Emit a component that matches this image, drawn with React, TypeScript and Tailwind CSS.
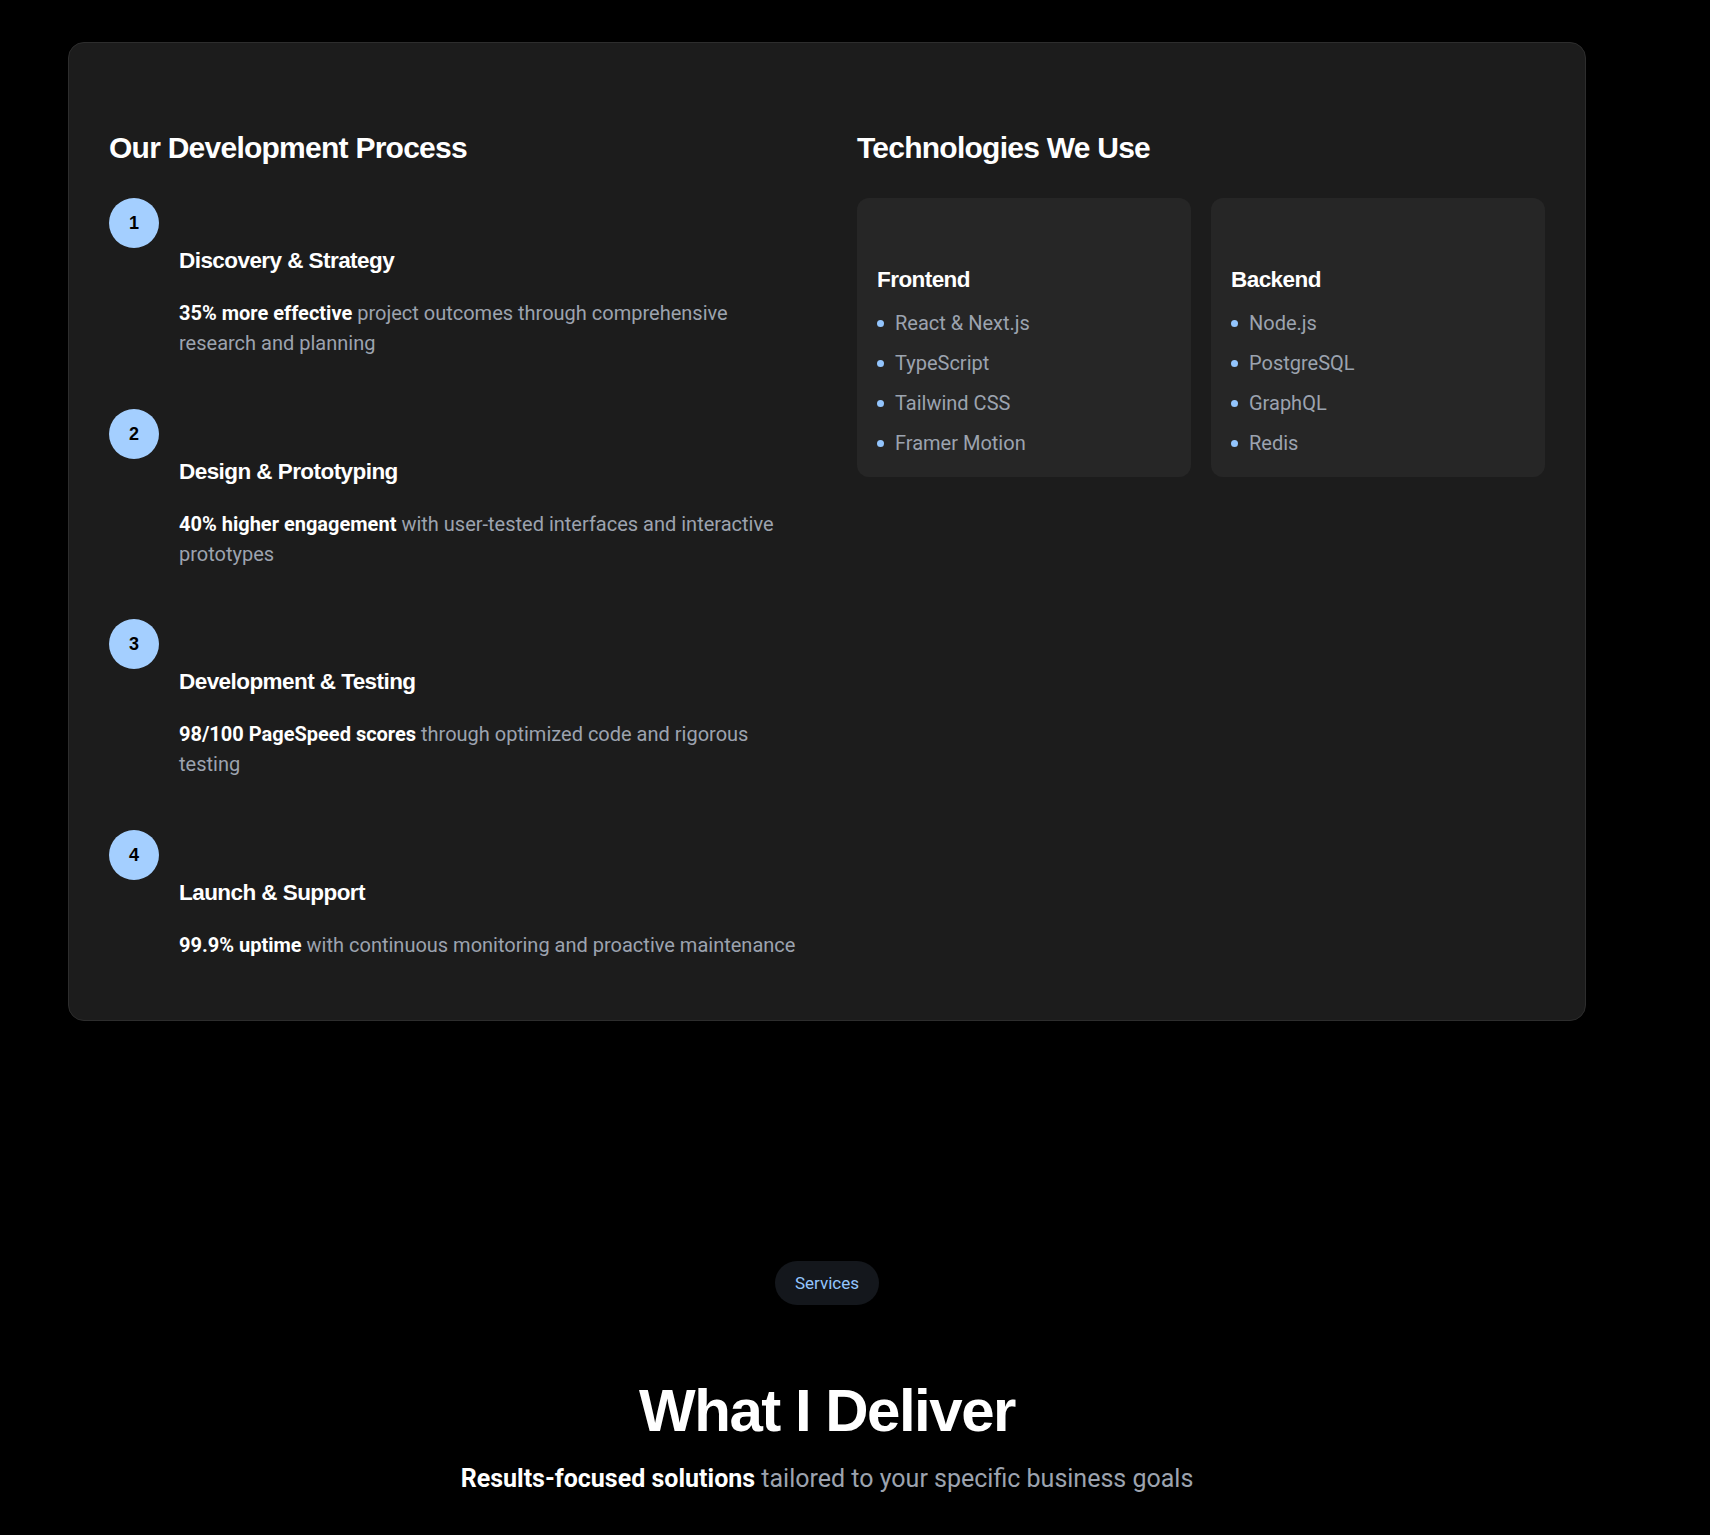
import React from "react";

// Process + tech stack card, followed by the "What I Deliver" section header

const heading = "font-['Liberation_Sans',Arial,Helvetica,sans-serif]";
const body = "font-['Roboto','Liberation_Sans',sans-serif]";

const steps = [
  {
    n: 1,
    title: "Discovery & Strategy",
    strong: "35% more effective",
    rest: "project outcomes through comprehensive research and planning",
  },
  {
    n: 2,
    title: "Design & Prototyping",
    strong: "40% higher engagement",
    rest: "with user-tested interfaces and interactive prototypes",
  },
  {
    n: 3,
    title: "Development & Testing",
    strong: "98/100 PageSpeed scores",
    rest: "through optimized code and rigorous testing",
  },
  {
    n: 4,
    title: "Launch & Support",
    strong: "99.9% uptime",
    rest: "with continuous monitoring and proactive maintenance",
  },
];

const stacks = [
  { name: "Frontend", items: ["React & Next.js", "TypeScript", "Tailwind CSS", "Framer Motion"] },
  { name: "Backend", items: ["Node.js", "PostgreSQL", "GraphQL", "Redis"] },
];

function StepItem({ step }: { step: (typeof steps)[number] }) {
  return (
    <div className="flex items-start gap-5">
      <div
        className={`flex h-[50px] w-[50px] shrink-0 items-center justify-center rounded-full bg-[#a4cfff] text-lg font-bold text-black ${heading}`}
      >
        {step.n}
      </div>
      <div className="flex-1">
        {/* icon slot (empty) */}
        <div className="h-12" />
        <h4 className={`mb-[23px] mt-px text-[22.5px] font-bold leading-[28px] tracking-tight text-white ${heading}`}>
          {step.title}
        </h4>
        <p className={`text-xl leading-[30px] text-[#9ca3af] ${body}`}>
          <strong className="font-bold text-white">{step.strong}</strong> {step.rest}
        </p>
      </div>
    </div>
  );
}

function StackCard({ stack }: { stack: (typeof stacks)[number] }) {
  return (
    <div className="rounded-xl bg-[#262626] p-5">
      <div className="h-12" />
      <h4 className={`mb-[15px] text-[22.5px] font-bold leading-[28px] tracking-tight text-white ${heading}`}>
        {stack.name}
      </h4>
      <ul className="flex flex-col gap-3">
        {stack.items.map((item) => (
          <li key={item} className={`flex items-center gap-[11px] text-xl leading-7 text-[#9ca3af] ${body}`}>
            <span className="h-[7px] w-[7px] shrink-0 rounded-full bg-[#93c5fd]" />
            {item}
          </li>
        ))}
      </ul>
    </div>
  );
}

export default function App() {
  return (
    <div className="min-h-[1535px] w-full bg-black">
      <div className="w-[1654px] pt-[42px]">
        {/* Process card */}
        <div className="mx-[68px] rounded-2xl border border-[#2d2d2d] bg-[#1c1c1c] px-10 pb-[60.5px] pt-[87px]">
          <div className="grid grid-cols-2 gap-[60px]">
            <div>
              <h3 className={`mb-8 text-3xl font-bold tracking-tight text-white ${heading}`}>
                Our Development Process
              </h3>
              <div className="flex flex-col gap-[50.5px]">
                {steps.map((s) => (
                  <StepItem key={s.n} step={s} />
                ))}
              </div>
            </div>
            <div>
              <h3 className={`mb-8 text-3xl font-bold tracking-tight text-white ${heading}`}>
                Technologies We Use
              </h3>
              <div className="grid grid-cols-2 gap-5">
                {stacks.map((s) => (
                  <StackCard key={s.name} stack={s} />
                ))}
              </div>
            </div>
          </div>
        </div>

        {/* Services header */}
        <div className="mt-[240px] flex flex-col items-center">
          <span className={`rounded-full bg-[#14171c] px-5 py-2.5 text-[17px] leading-6 text-[#93c5fd] ${body}`}>
            Services
          </span>
          <h2 className={`mt-[76px] text-6xl font-bold leading-none tracking-tight text-white ${heading}`}>
            What I Deliver
          </h2>
          <p className={`mt-[22px] text-[25px] leading-8 text-[#9ca3af] ${body}`}>
            <strong className="font-bold text-white">Results-focused solutions</strong> tailored to your specific
            business goals
          </p>
        </div>
      </div>
    </div>
  );
}
